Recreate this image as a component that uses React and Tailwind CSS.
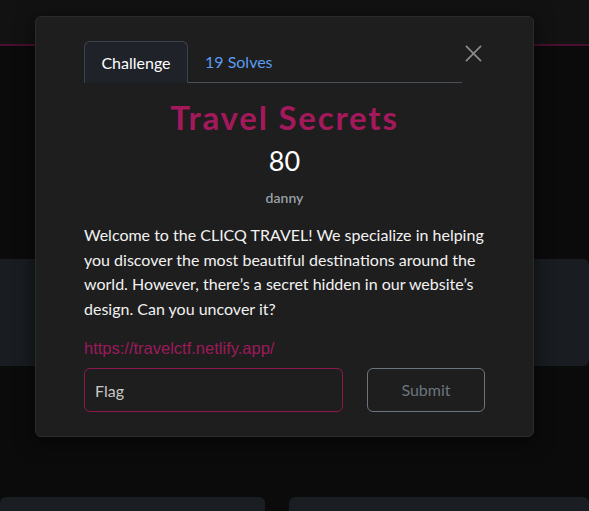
import React, { useState } from 'react'

export default function App() {
  const [flag, setFlag] = useState('')

  return (
    <div className="relative w-[589px] h-[511px] overflow-hidden bg-[#0b0b0b] font-['Lato','Noto_Sans',sans-serif]">
      {/* page behind the modal */}
      <div className="h-[46px] bg-[#121212] border-b-2 border-[#4a0f2e]" />
      <div className="mt-[213px] h-[107px] w-[589px] rounded-r-md bg-[#191d21]" />
      <div className="mt-[131px] flex gap-6">
        <div className="h-10 w-[265px] rounded-md bg-[#1a1d21]" />
        <div className="h-10 flex-1 rounded-md bg-[#1a1d21]" />
      </div>

      {/* modal */}
      <div className="absolute left-[35px] top-[16px] w-[499px] rounded-md border border-[#2b2b2b] bg-[#1e1e1e] px-12 pt-[24px] pb-[24px] shadow-[0_4px_20px_rgba(0,0,0,0.6)]">
        <div className="flex items-start">
          <div className="flex w-[378px] border-b border-[#495057]">
            <button className="-mb-px h-[42px] w-[104px] rounded-t-md border border-b-0 border-[#3d434a] bg-[#1f2329] text-[16px] text-white">
              Challenge
            </button>
            <button className="h-[41px] px-[17px] text-[16px] text-[#5b9cf2]">19 Solves</button>
          </div>
          <button className="ml-auto mr-[3px] mt-[4px] text-[#8a8a8a]" aria-label="Close">
            <svg width="17" height="17" viewBox="0 0 18 18" fill="none" stroke="currentColor" strokeWidth="1.8">
              <path d="M1 1L17 17M17 1L1 17" />
            </svg>
          </button>
        </div>

        <div className="text-center">
          <h1 className="mt-[12px] text-[33px] leading-[44px] font-bold tracking-[1.8px] text-[#a3195b]">Travel Secrets</h1>
          <div className="mt-[5px] text-[27px] leading-[34px] text-white">80</div>
          <div className="mt-[10px] text-[14px] leading-[20px] font-semibold text-[#9aa0a6]">danny</div>
        </div>

        <p className="mt-[15px] text-[16px] leading-[24.5px] text-[#f2f2f2]">
          Welcome to the CLICQ TRAVEL! We specialize in helping you discover the most beautiful destinations around the world. However, there’s a secret hidden in our website’s design. Can you uncover it?
        </p>

        <a
          href="#"
          className="mt-[15px] block font-['Liberation_Sans',Arial,sans-serif] text-[16.5px] leading-[24px] text-[#9c1a5a]"
        >
          https://travelctf.netlify.app/
        </a>

        <div className="mt-[8px] flex gap-6">
          <input
            value={flag}
            onChange={(e) => setFlag(e.target.value)}
            placeholder="Flag"
            className="h-[44px] w-[259px] rounded-md border border-[#8a1a4e] bg-transparent px-[10px] text-[16px] text-[#ddd] placeholder:text-[#c8c8c8] outline-none"
          />
          <button className="h-[44px] w-[118px] rounded-md border border-[#6c757d] text-[16px] text-[#6c757d]">
            Submit
          </button>
        </div>
      </div>
    </div>
  )
}
